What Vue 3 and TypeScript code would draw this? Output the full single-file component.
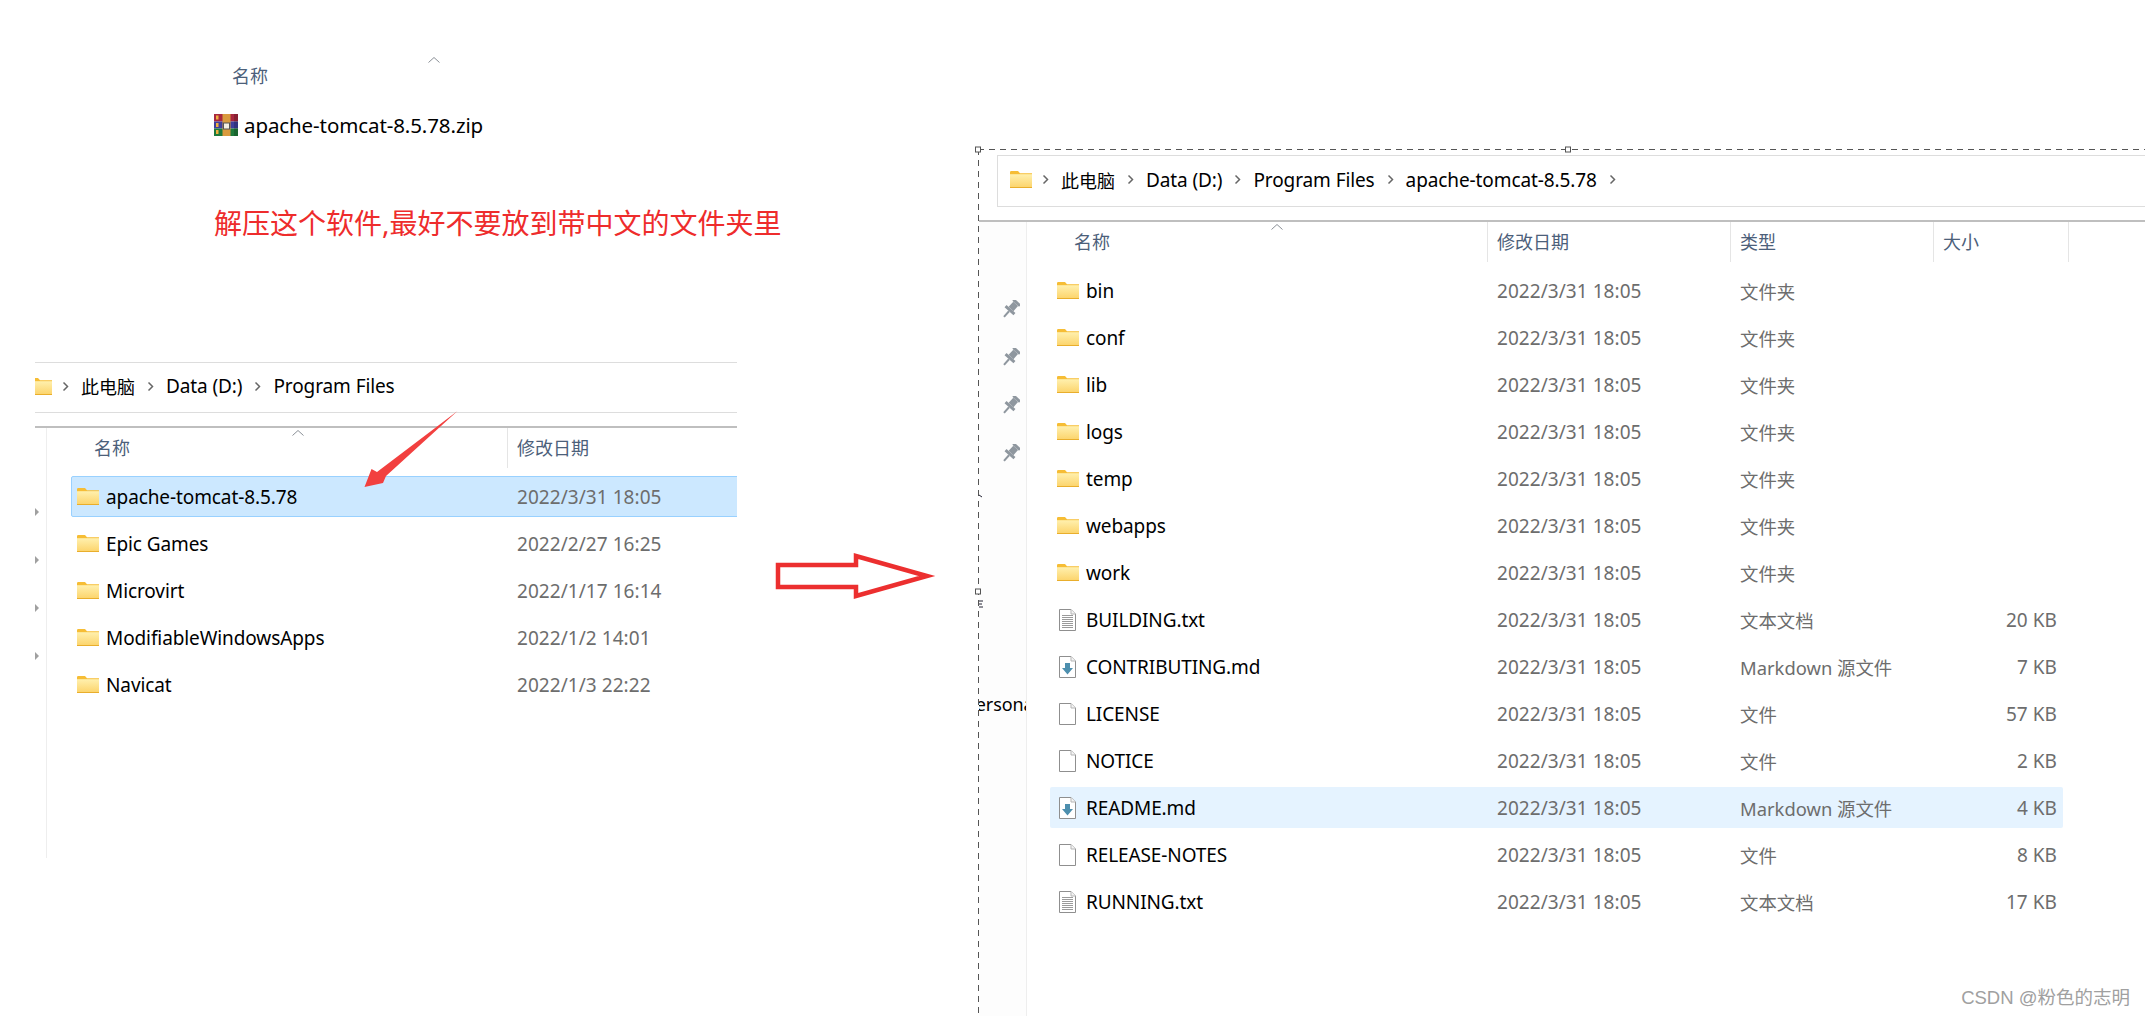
<script setup lang="ts">
interface FileRow {
  name: string;
  date: string;
  type?: string;
  size?: string;
  icon: string;
  hover?: boolean;
}

const leftRows: FileRow[] = [
  { name: 'apache-tomcat-8.5.78', date: '2022/3/31 18:05', icon: 'folder', hover: true },
  { name: 'Epic Games', date: '2022/2/27 16:25', icon: 'folder' },
  { name: 'Microvirt', date: '2022/1/17 16:14', icon: 'folder' },
  { name: 'ModifiableWindowsApps', date: '2022/1/2 14:01', icon: 'folder' },
  { name: 'Navicat', date: '2022/1/3 22:22', icon: 'folder' }
]

const when = '2022/3/31 18:05'
const rightRows: FileRow[] = [
  ...['bin', 'conf', 'lib', 'logs', 'temp', 'webapps', 'work'].map(name => ({
    name, date: when, type: '文件夹', icon: 'folder'
  })),
  { name: 'BUILDING.txt', date: when, type: '文本文档', size: '20 KB', icon: 'txt' },
  { name: 'CONTRIBUTING.md', date: when, type: 'Markdown 源文件', size: '7 KB', icon: 'md' },
  { name: 'LICENSE', date: when, type: '文件', size: '57 KB', icon: 'blank' },
  { name: 'NOTICE', date: when, type: '文件', size: '2 KB', icon: 'blank' },
  { name: 'README.md', date: when, type: 'Markdown 源文件', size: '4 KB', icon: 'md', hover: true },
  { name: 'RELEASE-NOTES', date: when, type: '文件', size: '8 KB', icon: 'blank' },
  { name: 'RUNNING.txt', date: when, type: '文本文档', size: '17 KB', icon: 'txt' }
]

const leftCrumbs = ['此电脑', 'Data (D:)', 'Program Files']
const rightCrumbs = [...leftCrumbs, 'apache-tomcat-8.5.78']
const columns = ['修改日期', '类型', '大小']
</script>

<template>
  <div class="canvas">
    <!-- shared icons -->
    <svg class="defs" width="0" height="0">
      <defs>
        <linearGradient id="folder-front" x1="0" y1="0" x2="0" y2="1">
          <stop offset="0" stop-color="#fff0ae" />
          <stop offset="1" stop-color="#fcd56e" />
        </linearGradient>
        <symbol id="folder" viewBox="0 0 22 17">
          <path d="M0 1.2Q0 0 1.2 0H8L10 2.2H22V17H0z" fill="#f6bd35" />
          <rect y="3.2" width="22" height="12.8" fill="url(#folder-front)" />
          <rect y="16" width="22" height="1" fill="#e9ae2c" />
        </symbol>
        <symbol id="sheet" viewBox="0 0 17 22">
          <path d="M.5.5H12L16.5 5V21.500H.5z" fill="#fff" stroke="#8f8f8f" />
          <path d="M12 .5V5H16.500" fill="#f4f4f4" stroke="#b5b5b5" />
        </symbol>
        <symbol id="pin" viewBox="0 0 18 18">
          <g fill="#8f979f" transform="rotate(42 9 9)">
            <rect x="4.500" y="-1" width="9" height="3" />
            <rect x="5.800" y="2" width="6.400" height="7" />
            <path d="M3 9H15V12H3z" />
            <rect x="8" y="12" width="2" height="7.500" />
          </g>
        </symbol>
      </defs>
    </svg>

    <div class="zip-snippet">
      <div class="zip-head">
        <span>名称</span>
        <svg class="caret zip-caret" width="12" height="6"><path d="M.5 5.500 6 .5l5.500 5" /></svg>
      </div>
      <div class="zip-file">
        <svg width="24" height="22" viewBox="0 0 24 22">
          <rect width="24" height="7.500" fill="#a8283f" />
          <rect y="7.500" width="24" height="7" fill="#3f3f9c" />
          <rect y="14.500" width="24" height="7.500" fill="#1f7a3a" />
          <rect x="2" y="1.500" width="2.500" height="4" fill="#f0b040" />
          <rect x="2" y="9" width="2.500" height="4" fill="#f0b040" />
          <rect x="2" y="16" width="2.500" height="4" fill="#f0b040" />
          <rect x="8.500" width="8" height="22" fill="#d99a3e" />
          <rect x="9.500" y="9" width="6" height="6" fill="#f4efe2" stroke="#555" />
          <rect x="20" y="0" width="4" height="22" fill="#000" opacity=".18" />
        </svg>
        <span>apache-tomcat-8.5.78.zip</span>
      </div>
    </div>

    <p class="note">解压这个软件,最好不要放到带中文的文件夹里</p>

    <!-- left explorer crop -->
    <section class="explorer explorer-left">
      <div class="crumbs">
        <svg class="crumb-folder" width="22" height="17"><use href="#folder" /></svg>
        <template v-for="(c, i) in leftCrumbs" :key="c">
          <svg class="chev" width="7" height="11" viewBox="0 0 7 11"><path d="M1.500 1.500 5.500 5.500 1.500 9.500" /></svg>
          <span :class="{ cjk: i === 0 }">{{ c }}</span>
        </template>
      </div>
      <div class="pane">
        <div class="side">
          <i v-for="n in 4" :key="n" class="tri" />
        </div>
        <div class="main">
          <div class="head">
            <span class="head-name">名称</span>
            <svg class="caret head-caret" width="12" height="6"><path d="M.5 5.500 6 .5l5.500 5" /></svg>
            <span class="head-col">修改日期</span>
          </div>
          <div class="rows">
            <div v-for="r in leftRows" :key="r.name" class="row" :class="{ selected: r.hover }">
              <svg class="ico-folder" width="22" height="17"><use href="#folder" /></svg>
              <span class="name">{{ r.name }}</span>
              <span class="date">{{ r.date }}</span>
            </div>
          </div>
        </div>
      </div>
    </section>

    <!-- right explorer crop -->
    <section class="explorer explorer-right">
      <div class="crumbs">
        <svg class="crumb-folder" width="22" height="17"><use href="#folder" /></svg>
        <template v-for="(c, i) in rightCrumbs" :key="c">
          <svg class="chev" width="7" height="11" viewBox="0 0 7 11"><path d="M1.500 1.500 5.500 5.500 1.500 9.500" /></svg>
          <span :class="{ cjk: i === 0 }">{{ c }}</span>
        </template>
        <svg class="chev" width="7" height="11" viewBox="0 0 7 11"><path d="M1.500 1.500 5.500 5.500 1.500 9.500" /></svg>
      </div>
      <div class="pane">
        <div class="side">
          <svg v-for="n in 4" :key="n" width="18" height="18"><use href="#pin" /></svg>
          <span class="clipped">Personal</span>
        </div>
        <div class="main">
          <div class="head">
            <span class="head-name">名称</span>
            <svg class="caret head-caret" width="12" height="6"><path d="M.5 5.500 6 .5l5.500 5" /></svg>
            <span v-for="c in columns" :key="c" class="head-col">{{ c }}</span>
            <span class="head-col" />
          </div>
          <div class="rows">
            <div v-for="r in rightRows" :key="r.name" class="row" :class="{ hover: r.hover }">
              <svg v-if="r.icon === 'folder'" class="ico-folder" width="22" height="17"><use href="#folder" /></svg>
              <svg v-else class="ico-file" width="17" height="22" viewBox="0 0 17 22">
                <use href="#sheet" width="17" height="22" />
                <path v-if="r.icon === 'txt'" d="M3 6.500H14M3 8.500H14M3 10.500H14M3 12.500H14M3 14.500H14M3 16.500H14M3 18.500H14" stroke="#9a9a9a" />
                <path v-if="r.icon === 'md'" d="M6 7H11V12H14L8.500 18.500 3 12H6z" fill="#4d8fae" />
              </svg>
              <span class="name">{{ r.name }}</span>
              <span class="date">{{ r.date }}</span>
              <span class="date type">{{ r.type }}</span>
              <span class="date size">{{ r.size }}</span>
            </div>
          </div>
        </div>
      </div>
    </section>

    <!-- annotations drawn on top of the screenshots -->
    <svg class="marks" width="2145" height="1016" viewBox="0 0 2145 1016">
      <polygon points="457.500,411 386,476 383,483 364.500,487 371.500,469 377,472" fill="#f2403f" />
      <polygon points="778,565 856,565 856,556 927,576 856,596 856,587 778,587" fill="none" stroke="#ec2f2f" stroke-width="4.500" />
      <g stroke="#555" fill="none">
        <path d="M978 149.500H2145M978.500 149V1016" stroke-dasharray="6 5" />
        <g fill="#fff">
          <rect x="975.500" y="147" width="5" height="5" />
          <rect x="1565.500" y="147" width="5" height="5" />
          <rect x="975.500" y="589" width="5" height="5" />
        </g>
        <path d="M979 495l3 2M979 601h4M979 604h3M979 607h4" stroke="#223" />
      </g>
    </svg>

    <div class="watermark">CSDN @粉色的志明</div>
  </div>
</template>

<style>
html, body {
  margin: 0;
  background: #fff;
}
</style>

<style scoped>
.canvas {
  position: relative;
  width: 2145px;
  height: 1016px;
  overflow: hidden;
  background: #fff;
  font-family: "Noto Sans", "Noto Sans CJK SC", sans-serif;
  font-size: 19px;
  letter-spacing: -0.1px;
  color: #000;
}

.defs {
  position: absolute;
}

.caret path {
  fill: none;
  stroke: #8a8f96;
}

/* top left: the zip file */
.zip-snippet {
  position: absolute;
  left: 214px;
  top: 60px;
}

.zip-head {
  position: relative;
  height: 53px;
  padding-left: 18px;
  font-size: 18px;
  color: #4c607a;
  letter-spacing: 0;
  line-height: 32px;
}

.zip-caret {
  position: absolute;
  left: 214px;
  top: -3px;
}

.zip-file {
  display: flex;
  align-items: center;
  gap: 6px;
  font-size: 20.500px;
  line-height: 24px;
}

.note {
  position: absolute;
  left: 214px;
  top: 203px;
  margin: 0;
  font-size: 28px;
  line-height: 40px;
  letter-spacing: 0;
  color: #ee2c2c;
  white-space: nowrap;
}

/* explorer crops */
.explorer {
  position: absolute;
  overflow: hidden;
}

.explorer-left {
  left: 35px;
  top: 362px;
  width: 702px;
  height: 496px;
}

.explorer-right {
  left: 979px;
  top: 155px;
  width: 1166px;
  height: 861px;
}

.crumbs {
  display: flex;
  align-items: center;
  box-sizing: border-box;
  padding-bottom: 3px;
}

.crumbs span {
  white-space: nowrap;
}

.crumbs .cjk {
  font-size: 18px;
  letter-spacing: 0;
}

.crumb-folder {
  flex: none;
  margin-right: -2px;
}

.chev {
  flex: none;
}

.chev path {
  fill: none;
  stroke: #666;
  stroke-width: 1.5;
}

.explorer-left .crumbs {
  height: 51px;
  border-top: 1px solid #ddd;
  border-bottom: 1px solid #ddd;
}

.explorer-left .crumb-folder {
  margin-left: -5px;
}

.explorer-left .chev {
  margin: 0 12px;
}

.explorer-left .pane {
  margin-top: 13px;
  height: 432px;
}

.explorer-right .crumbs {
  margin-left: 18px;
  height: 52px;
  padding-left: 12px;
  border: 1px solid #ddd;
  border-right: 0;
}

.explorer-right .chev {
  margin: 0 12px;
}

.explorer-right .pane {
  margin-top: 13px;
  height: 796px;
}

.pane {
  display: flex;
  border-top: 2px solid #bfbfbf;
}

.side {
  flex: none;
  display: flex;
  flex-direction: column;
  align-items: flex-start;
  box-sizing: border-box;
  overflow: hidden;
  border-right: 1px solid #eee;
}

.explorer-left .side {
  width: 12px;
  padding-top: 80px;
  gap: 40px;
}

.tri {
  display: block;
  margin-left: 0;
  width: 0;
  height: 0;
  border-left: 4px solid #a0a0a0;
  border-top: 4px solid transparent;
  border-bottom: 4px solid transparent;
}

.explorer-right .side {
  width: 48px;
  padding: 78px 0 0 23px;
  gap: 30px;
  background: #fdfdfd;
}

.clipped {
  margin: 200px 0 0 -37px;
  font-size: 18px;
  line-height: 24px;
  white-space: nowrap;
}

.main {
  flex: 1;
  min-width: 0;
}

.head {
  position: relative;
  display: grid;
  height: 40px;
  align-items: stretch;
  font-size: 18px;
  color: #4c607a;
  letter-spacing: 0;
  line-height: 40px;
}

.explorer-left .head {
  grid-template-columns: 460px 1fr;
}

.explorer-right .head {
  grid-template-columns: 460px 243px 203px 135px 1fr;
}

.head-name {
  padding-left: 47px;
}

.head-caret {
  position: absolute;
  top: 2px;
}

.explorer-left .head-caret {
  left: 245px;
}

.explorer-right .head-caret {
  left: 244px;
}

.head-col {
  box-sizing: border-box;
  padding-left: 9px;
  border-left: 1px solid #e5e5e5;
}

.explorer-right .head-col {
  white-space: nowrap;
}

.rows {
  display: flex;
  flex-direction: column;
  gap: 6px;
}

.explorer-left .rows {
  padding: 8px 0 0 24px;
}

.explorer-right .rows {
  padding: 8px 0 0 23px;
}

.row {
  display: grid;
  box-sizing: border-box;
  height: 41px;
  align-items: center;
  border: 1px solid transparent;
  border-radius: 2px;
  white-space: nowrap;
}

.explorer-left .row {
  grid-template-columns: 29px 411px 1fr;
  padding-left: 5px;
  margin-right: -8px;
}

.explorer-right .row {
  grid-template-columns: 27px 411px 243px 203px 1fr;
  width: 1013px;
  padding: 0 5px 0 8px;
}

.row.selected {
  background: #cce8ff;
  border-color: #99d1ff;
}

.row.hover {
  background: #e5f3ff;
}

.ico-folder {
  display: block;
}

.explorer-right .ico-folder {
  margin-left: -2px;
}

.ico-file {
  display: block;
}

.date {
  color: #6d6d6d;
  letter-spacing: 0.05px;
}

.type {
  font-size: 18.400px;
  letter-spacing: 0;
}

.size {
  text-align: right;
}

.watermark {
  position: absolute;
  right: 15px;
  top: 986px;
  font-family: "Liberation Sans", "Noto Sans CJK SC", sans-serif;
  font-size: 18.500px;
  line-height: 24px;
  letter-spacing: 0;
  color: #a0a0a0;
  white-space: nowrap;
}

.marks {
  position: absolute;
  left: 0;
  top: 0;
  pointer-events: none;
}
</style>
